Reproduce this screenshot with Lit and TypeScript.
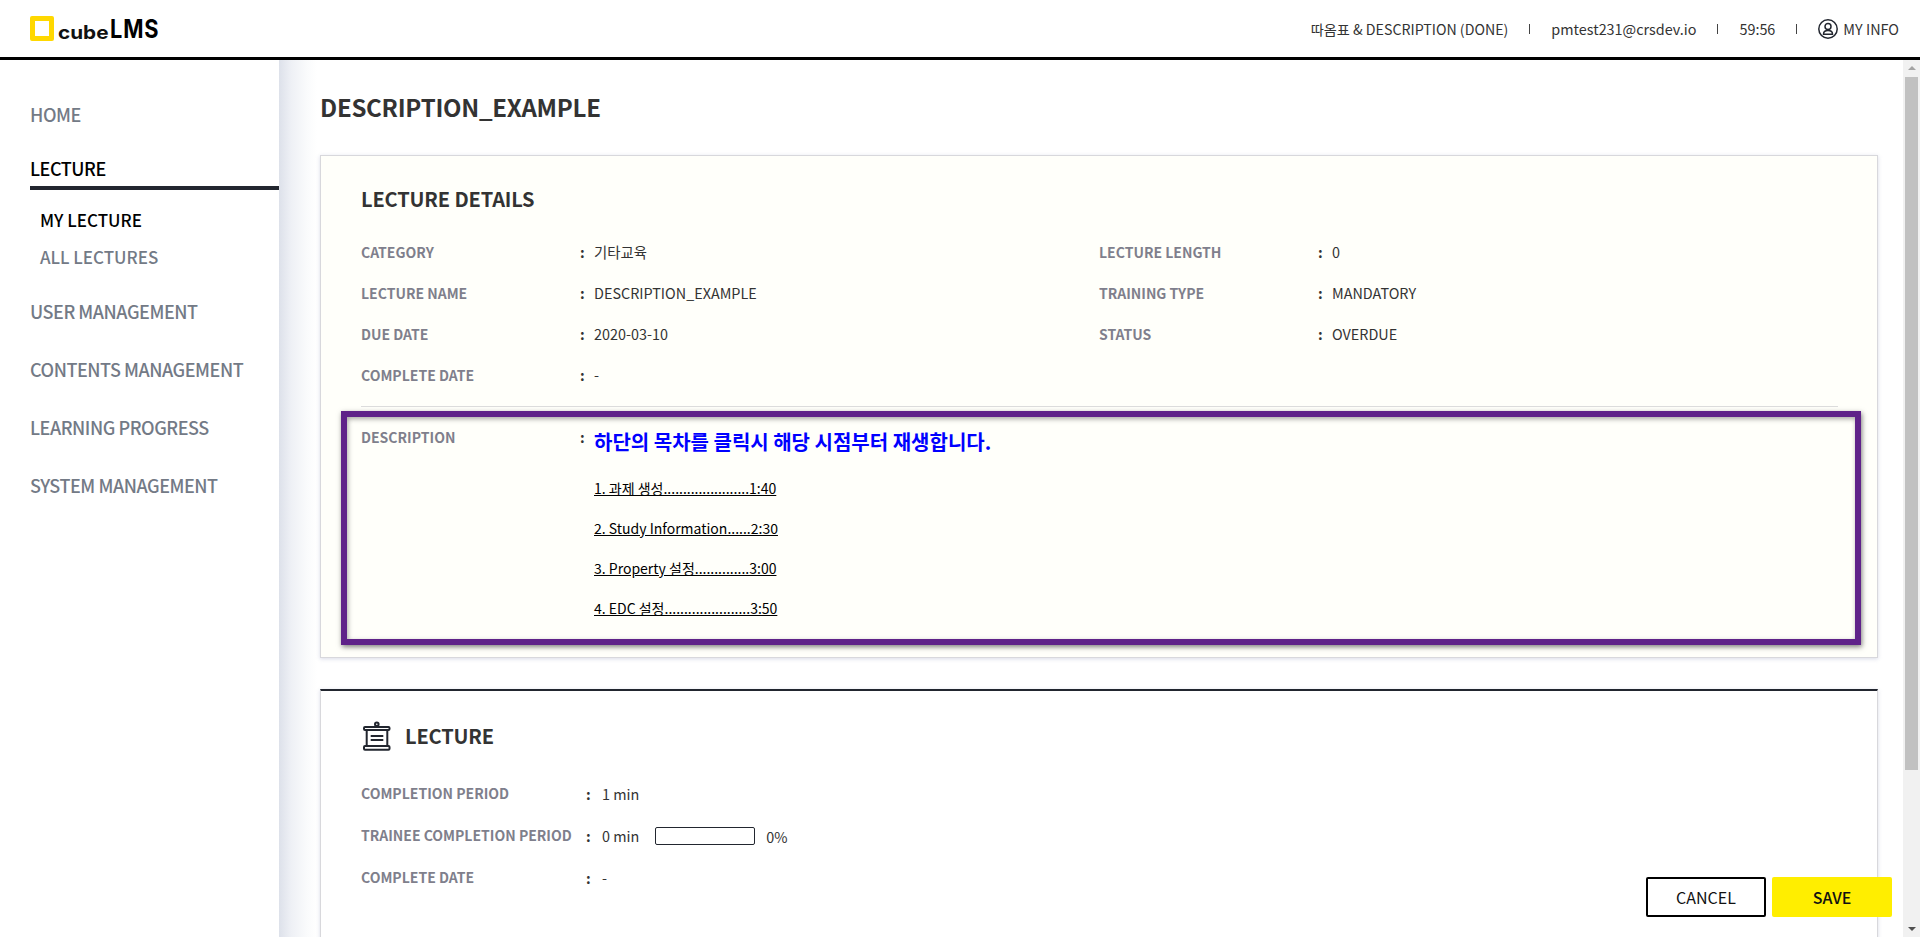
import { LitElement, html, css } from "lit";
import { customElement } from "lit/decorators.js";

@customElement("app-root")
export class AppRoot extends LitElement {
  static styles = css`
    :host { display: block; height: 937px; overflow: hidden; position: relative; background: #fff;
      font-family: "Noto Sans CJK KR", "Noto Sans", sans-serif; color: #333; font-size: 14.4px; }
    * { box-sizing: border-box; }
    .top { height: 60px; border-bottom: 3px solid #000; display: flex; align-items: center; padding: 0 21px 0 30px; }
    .logo { display: flex; align-items: flex-end; height: 25px; flex: none; }
    .cube { width: 24px; height: 25px; border: 5px solid #ffd800; border-radius: 2px; margin-right: 4px; background: #fff; }
    .logo-a { font-family: "Inter", sans-serif; font-weight: 700; font-size: 18.5px; line-height: 18px; color: #111; transform: scaleX(1.12); transform-origin: left; width: 52px; }
    .logo-b { font-family: "Inter", sans-serif; font-weight: 700; font-size: 25px; line-height: 23px; color: #000; letter-spacing: 1px; transform: scaleX(.87); transform-origin: left; }
    .info { margin-left: auto; display: flex; align-items: center; color: #333; font-size: 14.4px; line-height: 20px; }
    .course { font-size: 14.2px; }
    .sep { width: 1px; height: 10px; background: #444; margin: 0 21px; }
    .me { display: flex; align-items: center; gap: 5px; }
    .me svg { display: block; }
    .body { display: flex; height: 877px; }
    nav { width: 279px; flex: none; padding-top: 41px; }
    .nav { font-size: 18px; font-weight: 500; letter-spacing: -.45px; line-height: 26px; color: #737a86; padding-left: 30px; margin-bottom: 32px; white-space: nowrap; }
    .nav.on { color: #000; margin: -4px 0 0 30px; padding-left: 0; border-bottom: 4px solid #22262f; height: 35px; }
    .subs { padding: 17px 0 0 40px; font-size: 17px; font-weight: 500; line-height: 25px; color: #737a86; margin-bottom: 29px; }
    .subs div { margin-bottom: 12px; }
    .subs div:first-child { color: #000; }
    .subs div:last-child { margin-bottom: 0; }
    main { flex: 1; min-width: 0; padding: 30px 25px 0 41px; background: linear-gradient(90deg, #dde1ea 0, #eef0f5 12px, #fafbfc 28px, #fff 38px); overflow: hidden; }
    h1 { margin: 0 0 31px; font-size: 24px; line-height: 34px; font-weight: 700; color: #333; letter-spacing: -.26px; }
    .card { border: 1px solid #d8d8dc; box-shadow: 0 1px 4px rgba(170,175,205,.45); padding: 0 40px; }
    .details { background: #fffffa; height: 503px; padding-top: 26px; margin-bottom: 31px; }
    h2 { margin: 0; font-size: 20px; line-height: 34px; font-weight: 700; color: #333; letter-spacing: -.15px; }
    .grid { display: grid; grid-template-columns: 738px 1fr; margin-top: 15px; height: 175px; grid-auto-rows: 41px; }
    .row { display: flex; align-items: center; height: 41px; }
    .l { font-weight: 700; font-size: 14px; color: #7f7f8c; white-space: nowrap; }
    .row .l { width: 219px; flex: none; }
    .c { color: #333; font-weight: 700; width: 14px; flex: none; }
    hr { border: 0; border-top: 1px solid #ddd; margin: 0 -1px 0 0; height: 1px; }
    .desc { display: flex; margin-top: 20px; }
    .desc .l { width: 219px; line-height: 20px; }
    .desc .c { line-height: 20px; }
    .heading { font-size: 20px; font-weight: 700; color: #00f; line-height: 28px; margin-top: 1px; margin-bottom: 22px; }
    .toc a { display: block; width: max-content; color: #000; text-decoration: underline; font-size: 14px; line-height: 20px; margin-bottom: 20px; }
    .lecture { background: #fff; border-top: 2px solid #22262f; height: 400px; padding-top: 28px; }
    .lt { display: flex; align-items: center; gap: 14px; height: 34px; margin-left: 2px; }
    .rows { margin-top: 19px; }
    .rows .row { height: 42px; }
    .rows .row .l { width: 225px; }
    .rows .c { width: 16px; }
    .bar { width: 100px; height: 18px; border: 1px solid #22262f; border-radius: 2px; margin: 2px 11px 0 16px; background: #fff; }
    .pct { margin-top: 2px; }
    .high { position: absolute; left: 341px; top: 411px; width: 1520px; height: 234px; border: 6px solid #5f2289; box-shadow: 1px 2px 5px rgba(0,0,0,.5), inset 1px 2px 5px rgba(0,0,0,.35); pointer-events: none; }
    .sb { width: 17px; flex: none; background: #f1f1f1; display: flex; flex-direction: column; align-items: center; position: relative; }
    .thumb { width: 13px; height: 693px; background: #c1c1c1; margin-top: 17px; }
    .up, .down { position: absolute; width: 0; height: 0; border-left: 4px solid transparent; border-right: 4px solid transparent; }
    .up { top: 6px; border-bottom: 4px solid #a3a3a3; }
    .down { bottom: 6px; border-top: 4px solid #505050; }
    .btns { position: absolute; left: 1646px; top: 877px; display: flex; gap: 6px; }
    .btn { width: 120px; height: 40px; border-radius: 2px; display: flex; align-items: center; justify-content: center; font-size: 16px; font-weight: 500; color: #111; }
    .cancel { background: #fff; border: 2px solid #000; font-weight: 400; }
    .save { background: #ffee00; }
  `;

  private field(label: string, value: unknown, cls = "") {
    return html`<div class="row ${cls}"><span class="l">${label}</span><span class="c">:</span><span>${value}</span></div>`;
  }

  render() {
    return html`
      <header class="top">
        <div class="logo"><div class="cube"></div><span class="logo-a">cube</span><span class="logo-b">LMS</span></div>
        <div class="info">
          <span class="course">따옴표 &amp; DESCRIPTION (DONE)</span><i class="sep"></i>
          <span>pmtest231@crsdev.io</span><i class="sep"></i>
          <span>59:56</span><i class="sep"></i>
          <span class="me">
            <svg width="20" height="20" viewBox="0 0 20 20" fill="none" stroke="#22262f" stroke-width="1.5">
              <circle cx="10" cy="10" r="9.2"/><circle cx="10" cy="7.5" r="3"/>
              <path d="M5.5 15.2c0-2.6 1.6-3.6 4.5-3.6s4.5 1 4.5 3.6z"/>
            </svg>MY INFO</span>
        </div>
      </header>
      <div class="body">
        <nav>
          <div class="nav">HOME</div>
          <div class="nav on">LECTURE</div>
          <div class="subs"><div>MY LECTURE</div><div>ALL LECTURES</div></div>
          <div class="nav">USER MANAGEMENT</div>
          <div class="nav">CONTENTS MANAGEMENT</div>
          <div class="nav">LEARNING PROGRESS</div>
          <div class="nav">SYSTEM MANAGEMENT</div>
        </nav>
        <main>
          <h1>DESCRIPTION_EXAMPLE</h1>
          <section class="card details">
            <h2>LECTURE DETAILS</h2>
            <div class="grid">
              ${this.field("CATEGORY", "기타교육")}${this.field("LECTURE LENGTH", "0", "rt")}
              ${this.field("LECTURE NAME", "DESCRIPTION_EXAMPLE")}${this.field("TRAINING TYPE", "MANDATORY", "rt")}
              ${this.field("DUE DATE", "2020-03-10")}${this.field("STATUS", "OVERDUE", "rt")}
              ${this.field("COMPLETE DATE", "-")}
            </div>
            <hr />
            <div class="desc">
              <span class="l">DESCRIPTION</span><span class="c">:</span>
              <div>
                <div class="heading">하단의 목차를 클릭시 해당 시점부터 재생합니다.</div>
                <div class="toc">
                  <a>1. 과제 생성......................1:40</a>
                  <a>2. Study Information......2:30</a>
                  <a>3. Property 설정..............3:00</a>
                  <a>4. EDC 설정......................3:50</a>
                </div>
              </div>
            </div>
          </section>
          <section class="card lecture">
            <div class="lt">
              <svg width="28" height="30" viewBox="0 0 28 30" fill="none" stroke="#22262f" stroke-width="2">
                <rect x="1" y="6" width="25.5" height="3" rx="1"/><rect x="1" y="25" width="25.5" height="3.7" rx="1"/>
                <path d="M3.7 9v16M24.3 9v16M7.7 15h12.6M7.7 19h12.6"/><circle cx="13.8" cy="3.2" r="1.8"/>
              </svg>
              <h2>LECTURE</h2>
            </div>
            <div class="rows">
              ${this.field("COMPLETION PERIOD", "1 min")}
              <div class="row"><span class="l">TRAINEE COMPLETION PERIOD</span><span class="c">:</span><span>0 min</span><span class="bar"></span><span class="pct">0%</span></div>
              ${this.field("COMPLETE DATE", "-")}
            </div>
          </section>
        </main>
        <div class="sb"><i class="up"></i><div class="thumb"></div><i class="down"></i></div>
      </div>
      <div class="high"></div>
      <div class="btns"><div class="btn cancel">CANCEL</div><div class="btn save">SAVE</div></div>
    `;
  }
}
